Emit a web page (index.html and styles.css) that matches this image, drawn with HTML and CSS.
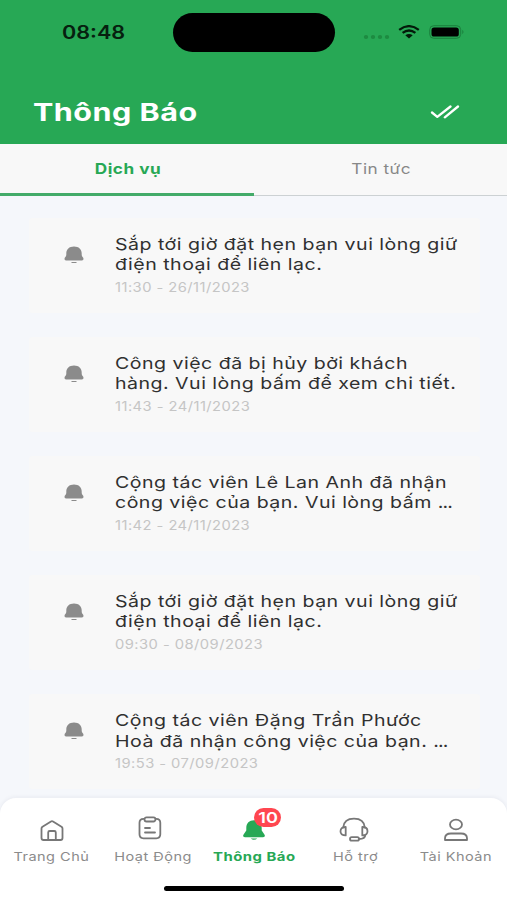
FILE: index.html
```html
<!DOCTYPE html>
<html lang="vi">
<head>
<meta charset="utf-8">
<title>Thông Báo</title>
<link rel="stylesheet" href="styles.css">
</head>
<body>
<svg class="defs" width="0" height="0">
  <symbol id="bell" viewBox="0 0 20 18"><path d="M2.300 9V7.500C2.300 3.200 5.200.4 10 .4s7.700 2.800 7.700 7.100V9c0 1.600 1.800 2.300 1.800 3.800 0 1.100-.7 1.600-1.500 1.600H2c-.8 0-1.500-.5-1.500-1.600C.5 11.300 2.300 10.600 2.300 9z"/><path d="M7 15.900h6c-.4.900-1.500 1.200-3 1.200s-2.600-.3-3-1.200z"/></symbol>
</svg>
<div class="screen">
  <header class="header">
    <div class="status">
      <span class="time"><span class="wide">08:48</span></span>
      <div class="island"></div>
      <div class="indicators">
        <svg class="dots" width="27" height="6" viewBox="0 0 27 6"><g fill="#1d8b41"><ellipse cx="3" cy="3" rx="2.200" ry="1.900"/><ellipse cx="10" cy="3" rx="2.200" ry="1.900"/><ellipse cx="17" cy="3" rx="2.200" ry="1.900"/><ellipse cx="24" cy="3" rx="2.200" ry="1.900"/></g></svg>
        <svg class="wifi" width="22" height="14" viewBox="0 0 22 14"><g fill="none" stroke="#031a0a" stroke-width="2.300"><path d="M1.200 4.900Q11-2.600 20.800 4.900"/><path d="M4.600 7.900Q11 3 17.400 7.900"/></g><path d="M7.300 10.200Q11 7.600 14.700 10.200L11 13.500z" fill="#031a0a"/></svg>
        <svg class="battery" width="36" height="14" viewBox="0 0 36 14"><rect x=".7" y=".7" width="31" height="12.600" rx="4" fill="none" stroke="#1b7f3d"/><rect x="2.500" y="2.500" width="27.300" height="9" rx="2.600"/><path d="M33.300 4.800q2.400 2.200 0 4.400z" fill="#1b7f3d"/></svg>
      </div>
    </div>
    <div class="titlebar">
      <h1><span class="wide">Thông Báo</span></h1>
      <svg width="30" height="14" viewBox="0 0 30 14" fill="none" stroke="#fff" stroke-width="2.300" stroke-linecap="round" stroke-linejoin="round"><path d="M2 7.500l5.300 4.400L20.500 1.500M14.800 12.300L28 1.500"/></svg>
    </div>
  </header>
  <nav class="tabs">
    <div class="tab active"><span class="wide">Dịch vụ</span></div>
    <div class="tab"><span class="wide">Tin tức</span></div>
  </nav>
  <main class="list">
    <article class="card"><svg class="bell"><use href="#bell"/></svg><div class="copy"><p><span class="wide">Sắp tới giờ đặt hẹn bạn vui lòng giữ</span></p><p><span class="wide">điện thoại để liên lạc.</span></p><time><span class="wide">11:30 - 26/11/2023</span></time></div></article>
    <article class="card"><svg class="bell"><use href="#bell"/></svg><div class="copy"><p><span class="wide">Công việc đã bị hủy bởi khách</span></p><p><span class="wide">hàng. Vui lòng bấm để xem chi tiết.</span></p><time><span class="wide">11:43 - 24/11/2023</span></time></div></article>
    <article class="card"><svg class="bell"><use href="#bell"/></svg><div class="copy"><p><span class="wide">Cộng tác viên Lê Lan Anh đã nhận</span></p><p><span class="wide">công việc của bạn. Vui lòng bấm <span class="more">...</span></span></p><time><span class="wide">11:42 - 24/11/2023</span></time></div></article>
    <article class="card"><svg class="bell"><use href="#bell"/></svg><div class="copy"><p><span class="wide">Sắp tới giờ đặt hẹn bạn vui lòng giữ</span></p><p><span class="wide">điện thoại để liên lạc.</span></p><time><span class="wide">09:30 - 08/09/2023</span></time></div></article>
    <article class="card"><svg class="bell"><use href="#bell"/></svg><div class="copy"><p><span class="wide">Cộng tác viên Đặng Trần Phước</span></p><p><span class="wide">Hoà đã nhận công việc của bạn. <span class="more">...</span></span></p><time><span class="wide">19:53 - 07/09/2023</span></time></div></article>
  </main>
  <footer class="bottom">
    <div class="items">
      <div class="item"><svg width="32" height="28" viewBox="0 0 32 28"><path d="M5.500 12.500Q5.500 11.500 6.500 10.800L15 5.500q1-.6 2 0l8.500 5.300q1 .7 1 1.700V22q0 2-2 2h-17q-2 0-2-2zM12.200 24v-7.500q0-1.500 1.500-1.500h4.600q1.500 0 1.500 1.500V24"/></svg><span class="label"><span class="wide">Trang Chủ</span></span></div>
      <div class="item"><svg class="clipboard" width="32" height="28" viewBox="0 0 32 28"><path d="M10.300 2.800H9.500q-4 0-4 4v11.500q0 4 4 4h12.800q4 0 4-4V6.800q0-4-4-4h-.8"/><rect x="10.500" y="1.300" width="11" height="4.200" rx="2"/><path d="M11 12h5M11 16.500h10"/></svg><span class="label"><span class="wide">Hoạt Động</span></span></div>
      <div class="item active"><svg class="navbell" width="32" height="28" viewBox="0 0 32 28"><path d="M8.300 14.500V12c0-4.700 3-7.700 7.700-7.700s7.700 3 7.700 7.700v2.500l2.700 4c1 1.500.4 2.700-1.400 2.700H7c-1.800 0-2.400-1.200-1.400-2.700z"/><path d="M12.700 22.500h6.600q-3.300 2.600-6.600 0z"/></svg><span class="badge"><span class="wide">10</span></span><span class="label"><span class="wide">Thông Báo</span></span></div>
      <div class="item"><svg class="headset" width="32" height="28" viewBox="0 0 32 28"><path d="M5.200 11.500C5.700 6 9.500 2.700 16 2.700s10.300 3.300 10.800 8.800"/><path d="M7.700 11c-3 0-5.200 1.500-5.200 4.200s2.200 4.200 5.200 4.200zM24.300 11c3 0 5.200 1.500 5.200 4.200s-2.200 4.200-5.200 4.200zM27.300 19q0 4-6.500 4"/><rect x="12" y="21.200" width="9" height="3.400" rx="1.700"/></svg><span class="label"><span class="wide">Hỗ trợ</span></span></div>
      <div class="item"><svg width="32" height="28" viewBox="0 0 32 28"><ellipse cx="16" cy="8.500" rx="6" ry="4.800"/><path d="M5 24v-1.800q0-4.700 6-4.700h10q6 0 6 4.700V24z"/></svg><span class="label"><span class="wide">Tài Khoản</span></span></div>
    </div>
    <div class="home"></div>
  </footer>
</div>
</body>
</html>
```

FILE: styles.css
```css
* { box-sizing: border-box; }
body { margin: 0; font-family: Inter, "Liberation Sans", sans-serif; background: #f5f7fb; }
h1, p { margin: 0; font-weight: inherit; }
.defs { display: none; }
.screen { width: 507px; height: 900px; overflow: hidden; display: flex; flex-direction: column; background: #f5f7fb; }
.wide { display: inline-block; white-space: nowrap; transform: scaleX(1.186); transform-origin: left center; letter-spacing: .4px; }
.more { letter-spacing: -.8px; }
.header { height: 144px; flex: none; background: #27a855; }
.status { height: 64px; display: grid; grid-template-columns: 173px 162px 1fr; align-items: center; }
.time { padding-left: 62px; font-size: 18px; font-weight: 600; color: #06200f; }
.time .wide { transform: scaleX(1.200); letter-spacing: 0; }
.island { height: 39px; border-radius: 20px; background: #000; }
.indicators { display: flex; align-items: center; padding-left: 28px; }
.dots { margin-top: 9px; }
.wifi { margin-left: 8px; }
.battery { margin-left: 9px; }
.titlebar { height: 80px; display: flex; align-items: center; justify-content: space-between; padding: 16px 47px 0 33px; }
.titlebar h1 { font-size: 24.500px; line-height: 30px; font-weight: 700; color: #fff; }
.titlebar .wide { transform: scaleX(1.245); }
.tabs { height: 52px; flex: none; display: flex; background: #f8f8f8; font-size: 14.500px; }
.tab { flex: 1; display: flex; justify-content: center; padding: 16px 0 0 2px; line-height: 18px; color: #888; border-bottom: 1px solid #ccd1d3; }
.tab.active { color: #27a855; font-weight: 700; border-bottom: 3px solid #43ab69; }
.tab .wide, .item .wide { transform-origin: center; }
.list { flex: 1; padding: 21.500px 27px 0 29px; display: flex; flex-direction: column; gap: 24.200px; overflow: hidden; }
.card { height: 95px; flex: none; background: #f8f8f8; border-radius: 3px; display: flex; padding: 16px 0 0 34.500px; }
.bell { width: 20px; height: 18px; margin: 12px 31px 0 0; fill: #8b8b8b; flex: none; }
.copy { font-size: 16.500px; line-height: 20.300px; color: #303030; }
.copy p { height: 20.300px; }
.copy time { display: block; font-size: 12.800px; line-height: 16px; margin-top: 5.500px; color: #c5c5c5; }
.copy time .wide { transform: scaleX(1.150); }
.bottom { height: 102px; flex: none; background: #fff; border-radius: 16px 16px 0 0; box-shadow: 0 -1px 4px rgba(30,40,60,.06); }
.items { height: 80px; display: grid; grid-template-columns: repeat(5, 1fr); padding: 18px 0 0 1px; }
.item { display: flex; flex-direction: column; align-items: center; position: relative; color: #8b8b8b; font-size: 12px; }
.item .wide { transform: scaleX(1.210); }
.item svg { fill: none; stroke: #777; stroke-width: 1.800; stroke-linecap: round; stroke-linejoin: round; flex: none; }
.item .clipboard { margin-right: 6px; }
.item .headset { margin-right: 2px; }
.item .navbell { fill: #27a855; stroke: none; }
.item.active { color: #27a855; font-weight: 700; }
.item.active .label .wide { transform: scaleX(1.240); }
.label { margin-top: 5px; line-height: 16px; }
.badge { position: absolute; left: 51px; top: -8px; width: 27px; height: 19px; border-radius: 10px; background: #ff4650; color: #fff; text-align: center; line-height: 19px; font-size: 15px; font-weight: 600; }
.badge .wide { letter-spacing: 0; }
.home { width: 180px; height: 5px; border-radius: 3px; background: #000; margin: 8px auto 0; }
```
